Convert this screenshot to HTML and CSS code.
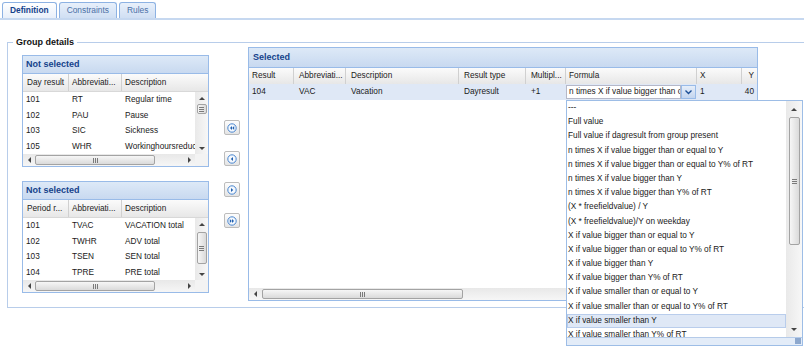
FILE: index.html
```html
<!DOCTYPE html>
<html>
<head>
<meta charset="utf-8">
<link rel="stylesheet" href="styles.css">
</head>
<body>
<div class="tabbar">
  <div class="tab active">Definition</div>
  <div class="tab">Constraints</div>
  <div class="tab">Rules</div>
</div>
<div class="page">
  <fieldset class="group">
    <legend>Group details</legend>
    <div class="group-body">
      <div class="left-col">
        <div class="panel small">
          <div class="panel-head">Not selected</div>
          <div class="ghead">
            <div class="hc c1">Day result</div>
            <div class="hc c2">Abbreviati...</div>
            <div class="hc c3">Description</div>
          </div>
          <div class="gbody">
            <div class="rows">
              <div class="row"><div class="c c1">101</div><div class="c c2">RT</div><div class="c c3">Regular time</div></div>
              <div class="row"><div class="c c1">102</div><div class="c c2">PAU</div><div class="c c3">Pause</div></div>
              <div class="row"><div class="c c1">103</div><div class="c c2">SIC</div><div class="c c3">Sickness</div></div>
              <div class="row"><div class="c c1">105</div><div class="c c2">WHR</div><div class="c c3">Workinghoursreduction</div></div>
            </div>
            <div class="vscroll">
              <div class="varr"><span class="tri-up"></span></div>
              <div class="vthumb t1"><span class="hgrip"></span></div>
              <div class="vfill"></div>
              <div class="varr"><span class="tri-down"></span></div>
            </div>
          </div>
          <div class="hrow">
            <div class="hscroll">
              <div class="harr"><span class="tri-left"></span></div>
              <div class="hthumb small-thumb"><span class="vgrip"></span></div>
              <div class="hfill"></div>
              <div class="harr"><span class="tri-right"></span></div>
            </div>
            <div class="corner"></div>
          </div>
        </div>

        <div class="panel small">
          <div class="panel-head">Not selected</div>
          <div class="ghead">
            <div class="hc c1">Period r...</div>
            <div class="hc c2">Abbreviati...</div>
            <div class="hc c3">Description</div>
          </div>
          <div class="gbody">
            <div class="rows">
              <div class="row"><div class="c c1">101</div><div class="c c2">TVAC</div><div class="c c3">VACATION total</div></div>
              <div class="row"><div class="c c1">102</div><div class="c c2">TWHR</div><div class="c c3">ADV total</div></div>
              <div class="row"><div class="c c1">103</div><div class="c c2">TSEN</div><div class="c c3">SEN total</div></div>
              <div class="row"><div class="c c1">104</div><div class="c c2">TPRE</div><div class="c c3">PRE total</div></div>
            </div>
            <div class="vscroll">
              <div class="varr"><span class="tri-up"></span></div>
              <div class="vthumb t2"><span class="hgrip"></span></div>
              <div class="vfill"></div>
              <div class="varr"><span class="tri-down"></span></div>
            </div>
          </div>
          <div class="hrow">
            <div class="hscroll">
              <div class="harr"><span class="tri-left"></span></div>
              <div class="hthumb small-thumb"><span class="vgrip"></span></div>
              <div class="hfill"></div>
              <div class="harr"><span class="tri-right"></span></div>
            </div>
            <div class="corner"></div>
          </div>
        </div>
      </div>

      <div class="move-btns">
        <div class="mbtn"><svg width="10" height="10" viewBox="0 0 10 10"><circle cx="5" cy="5" r="4.2" fill="#f4f8fd" stroke="#4a86cf" stroke-width="1"/><path d="M5 3 L3 5 L5 7Z M7.2 3 L5.2 5 L7.2 7Z" fill="#2060b0"/></svg></div>
        <div class="mbtn"><svg width="10" height="10" viewBox="0 0 10 10"><circle cx="5" cy="5" r="4.2" fill="#f4f8fd" stroke="#4a86cf" stroke-width="1"/><path d="M6 3 L3.8 5 L6 7Z" fill="#2060b0"/></svg></div>
        <div class="mbtn"><svg width="10" height="10" viewBox="0 0 10 10"><circle cx="5" cy="5" r="4.2" fill="#f4f8fd" stroke="#4a86cf" stroke-width="1"/><path d="M4 3 L6.2 5 L4 7Z" fill="#2060b0"/></svg></div>
        <div class="mbtn"><svg width="10" height="10" viewBox="0 0 10 10"><circle cx="5" cy="5" r="4.2" fill="#f4f8fd" stroke="#4a86cf" stroke-width="1"/><path d="M2.8 3 L4.8 5 L2.8 7Z M5 3 L7 5 L5 7Z" fill="#2060b0"/></svg></div>
      </div>

      <div class="panel selected">
        <div class="panel-head">Selected</div>
        <div class="ghead sel-ghead">
          <div class="hc s1">Result</div>
          <div class="hc s2">Abbreviati...</div>
          <div class="hc s3">Description</div>
          <div class="hc s4">Result type</div>
          <div class="hc s5">Multipl...</div>
          <div class="hc s6">Formula</div>
          <div class="hc s7">X</div>
          <div class="hc s8 right">Y</div>
        </div>
        <div class="row sel-row">
          <div class="c s1">104</div>
          <div class="c s2">VAC</div>
          <div class="c s3">Vacation</div>
          <div class="c s4">Dayresult</div>
          <div class="c s5">+1</div>
          <div class="c s6 combo-cell">
            <div class="combo">
              <div class="combo-input">n times X if value bigger than or</div>
              <div class="combo-trigger"><svg width="9" height="8" viewBox="0 0 9 8"><path d="M1.5 2.5 L4.5 5.5 L7.5 2.5" fill="none" stroke="#1c4f97" stroke-width="1.4"/></svg></div>
            </div>
          </div>
          <div class="c s7">1</div>
          <div class="c s8 right">40</div>
        </div>
        <div class="sel-body"></div>
        <div class="hscroll sel-hscroll">
          <div class="harr"><span class="tri-left"></span></div>
          <div class="hthumb big-thumb"><span class="vgrip"></span></div>
          <div class="hfill"></div>
          <div class="harr"><span class="tri-right"></span></div>
        </div>

        <div class="combo-list">
          <div class="cl-main">
            <div class="cl-items">
              <div class="cl-item">---</div>
              <div class="cl-item">Full value</div>
              <div class="cl-item">Full value if dagresult from group present</div>
              <div class="cl-item">n times X if value bigger than or equal to Y</div>
              <div class="cl-item">n times X if value bigger than or equal to Y% of RT</div>
              <div class="cl-item">n times X if value bigger than Y</div>
              <div class="cl-item">n times X if value bigger than Y% of RT</div>
              <div class="cl-item">(X * freefieldvalue) / Y</div>
              <div class="cl-item">(X * freefieldvalue)/Y on weekday</div>
              <div class="cl-item">X if value bigger than or equal to Y</div>
              <div class="cl-item">X if value bigger than or equal to Y% of RT</div>
              <div class="cl-item">X if value bigger than Y</div>
              <div class="cl-item">X if value bigger than Y% of RT</div>
              <div class="cl-item">X if value smaller than or equal to Y</div>
              <div class="cl-item">X if value smaller than or equal to Y% of RT</div>
              <div class="cl-item sel">X if value smaller than Y</div>
              <div class="cl-item">X if value smaller than Y% of RT</div>
            </div>
            <div class="cl-scroll">
              <div class="cl-arr"><span class="tri-up"></span></div>
              <div class="cl-thumb"><span class="hgrip"></span></div>
              <div class="vfill"></div>
              <div class="cl-arr"><span class="tri-down"></span></div>
            </div>
          </div>
          <div class="cl-foot"><span class="grip-dots"></span></div>
        </div>
      </div>
    </div>
  </fieldset>
</div>
</body>
</html>
```
FILE: styles.css
```css
html, body {
  margin: 0;
  padding: 0;
}
body {
  font-family: "Liberation Sans", Arial, sans-serif;
  font-size: 8.25px;
  color: #1a1a1a;
  background: #fff;
  width: 804px;
  height: 348px;
  overflow: hidden;
}

/* tabs */
.tabbar {
  display: flex;
  align-items: flex-end;
  gap: 2px;
  padding-left: 2px;
  height: 18px;
  border-bottom: 2px solid #c6d8f0;
}
.tab {
  box-sizing: border-box;
  height: 16px;
  padding: 0 7px;
  border: 1px solid #8db2e3;
  border-bottom: none;
  border-radius: 3px 3px 0 0;
  background: linear-gradient(#e8f0fb, #d0dff3);
  color: #4b70a6;
  font-size: 8.4px;
  line-height: 15px;
}
.tab.active {
  background: linear-gradient(#ffffff, #e9f0fa);
  color: #15428b;
  font-weight: bold;
}

/* fieldset */
.page {
  padding: 17px 0 0 7px;
}
.group {
  margin: 0 -20px 0 0;
  padding: 0 0 6px 5px;
  border: 1px solid #b8cdea;
  min-width: 0;
}
.group legend {
  padding: 0 3px;
  font-weight: bold;
  font-size: 9px;
  line-height: 10px;
  color: #111;
}
.group-body {
  display: flex;
  align-items: flex-start;
  padding-left: 9px;
}

/* panels */
.panel {
  box-sizing: border-box;
  border: 1px solid #99bbe8;
  background: #fff;
}
.panel-head {
  height: 17px;
  border-bottom: 1px solid #99bbe8;
  background: linear-gradient(#dde9f7, #c8d9f0);
  color: #15428b;
  font-weight: bold;
  font-size: 9px;
  line-height: 17px;
  padding-left: 3px;
}
.left-col {
  width: 187px;
  margin-top: 8px;
  display: flex;
  flex-direction: column;
  gap: 14px;
}
.small {
  height: 112px;
  display: flex;
  flex-direction: column;
}

/* grid header */
.ghead {
  display: flex;
  box-sizing: border-box;
  height: 18px;
  background: linear-gradient(#fbfbfb, #e7e7e7);
  border-bottom: 1px solid #d8d8d8;
}
.hc {
  box-sizing: border-box;
  border-right: 1px solid #d0d0d0;
  padding-left: 3px;
  line-height: 17px;
  white-space: nowrap;
  overflow: hidden;
  color: #222;
}
.c1 { width: 46px; flex: none; padding-left: 4px; }
.c2 { width: 53px; flex: none; }
.c3 { flex: 1; min-width: 0; border-right: none; }

.gbody {
  display: flex;
  height: 62px;
}
.rows {
  flex: 1;
  min-width: 0;
  overflow: hidden;
}
.row {
  display: flex;
  height: 15.5px;
  line-height: 15.5px;
  white-space: nowrap;
}
.c {
  box-sizing: border-box;
  padding-left: 3px;
  overflow: hidden;
  white-space: nowrap;
}

/* scrollbars */
.vscroll {
  width: 13px;
  flex: none;
  display: flex;
  flex-direction: column;
  align-items: center;
  background: linear-gradient(90deg, #e9e9e9, #f7f7f7);
}
.varr, .cl-arr {
  height: 12px;
  width: 100%;
  flex: none;
  display: flex;
  align-items: center;
  justify-content: center;
}
.cl-arr { height: 16px; }
.vfill { flex: 1; }
.vthumb, .cl-thumb {
  box-sizing: border-box;
  width: 10px;
  flex: none;
  border: 1px solid #a3a3a3;
  border-radius: 2px;
  background: linear-gradient(90deg, #f6f6f6, #dadada);
  display: flex;
  align-items: center;
  justify-content: center;
}
.t1 { height: 10px; }
.t2 { height: 32px; margin-top: 2px; }
.hgrip {
  width: 5px;
  height: 5px;
  background: repeating-linear-gradient(#7a7a7a 0 1px, transparent 1px 2px);
}
.tri-up {
  width: 0; height: 0;
  border-left: 3px solid transparent;
  border-right: 3px solid transparent;
  border-bottom: 3px solid #444;
}
.tri-down {
  width: 0; height: 0;
  border-left: 3px solid transparent;
  border-right: 3px solid transparent;
  border-top: 3px solid #444;
}
.tri-left {
  width: 0; height: 0;
  border-top: 3px solid transparent;
  border-bottom: 3px solid transparent;
  border-right: 3px solid #444;
}
.tri-right {
  width: 0; height: 0;
  border-top: 3px solid transparent;
  border-bottom: 3px solid transparent;
  border-left: 3px solid #444;
}
.hrow {
  display: flex;
  height: 12px;
}
.hscroll {
  flex: 1;
  display: flex;
  align-items: center;
  height: 12px;
  background: linear-gradient(#e8e8e8, #f6f6f6);
}
.harr {
  width: 12px;
  height: 12px;
  flex: none;
  display: flex;
  align-items: center;
  justify-content: center;
}
.hthumb {
  box-sizing: border-box;
  height: 10px;
  flex: none;
  border: 1px solid #a3a3a3;
  border-radius: 2px;
  background: linear-gradient(#f6f6f6, #dadada);
  display: flex;
  align-items: center;
  justify-content: center;
}
.small-thumb { width: 120px; }
.big-thumb { width: 201px; margin-left: 1px; }
.vgrip {
  width: 5px;
  height: 5px;
  background: repeating-linear-gradient(90deg, #7a7a7a 0 1px, transparent 1px 2px);
}
.hfill { flex: 1; }
.corner {
  width: 13px;
  flex: none;
  background: #f3f3f3;
}

/* move buttons */
.move-btns {
  margin: 73px 0 0 15px;
  display: flex;
  flex-direction: column;
  gap: 16px;
}
.mbtn {
  box-sizing: border-box;
  width: 16px;
  height: 15px;
  border: 1px solid #bcbcbc;
  border-radius: 2px;
  background: linear-gradient(#fdfdfd, #e4e4e4);
  display: flex;
  align-items: center;
  justify-content: center;
}

/* selected panel */
.selected {
  position: relative;
  width: 510px;
  height: 254px;
  margin-left: 8px;
  display: flex;
  flex-direction: column;
}
.selected .panel-head {
  height: 19px;
  line-height: 19px;
  padding-left: 4px;
}
.sel-ghead {
  height: 16px;
  border-bottom: none;
}
.sel-ghead .hc { line-height: 16px; }
.s1 { width: 45px; flex: none; padding-left: 3px; }
.s2 { width: 52px; flex: none; padding-left: 5px; }
.s3 { width: 113px; flex: none; padding-left: 5px; }
.s4 { width: 67px; flex: none; padding-left: 5px; }
.s5 { width: 40px; flex: none; padding-left: 5px; }
.s6 { width: 131px; flex: none; padding-left: 3px; }
.s7 { width: 45px; flex: none; padding-left: 3px; }
.s8 { width: 15px; flex: none; border-right: none; }
.right { text-align: right; padding-left: 0; padding-right: 3px; }
.sel-row {
  height: 16px;
  line-height: 16px;
  background: #dfe8f6;
}
.combo-cell {
  padding: 1px 1px 1px 0;
}
.combo {
  display: flex;
  height: 14px;
}
.combo-input {
  flex: 1;
  min-width: 0;
  box-sizing: border-box;
  border: 1px solid #b5b8c8;
  background: #fff;
  padding-left: 2px;
  line-height: 12px;
  white-space: nowrap;
  overflow: hidden;
}
.combo-trigger {
  width: 15px;
  flex: none;
  box-sizing: border-box;
  border: 1px solid #99bbe8;
  background: linear-gradient(#e6eef9, #c3d5ef);
  display: flex;
  align-items: center;
  justify-content: center;
}
.sel-body { flex: 1; }
.sel-hscroll { flex: none; }

/* combo dropdown list */
.combo-list {
  position: absolute;
  left: 317px;
  top: 52px;
  width: 237px;
  height: 246px;
  box-sizing: border-box;
  border: 1px solid #9dbde6;
  background: #fff;
  display: flex;
  flex-direction: column;
  z-index: 5;
}
.cl-main {
  display: flex;
  height: 236px;
  flex: none;
}
.cl-items {
  flex: 1;
  min-width: 0;
  overflow: hidden;
}
.cl-item {
  box-sizing: border-box;
  height: 14.2px;
  line-height: 14.2px;
  padding-left: 1px;
  white-space: nowrap;
  overflow: hidden;
}
.cl-item.sel {
  background: #dfe8f6;
  border: 1px solid #b9cdec;
  line-height: 12.2px;
  padding-left: 0;
}
.cl-scroll {
  width: 16px;
  flex: none;
  display: flex;
  flex-direction: column;
  align-items: center;
  background: linear-gradient(90deg, #e9e9e9, #f7f7f7);
}
.cl-thumb {
  width: 11px;
  height: 128px;
}
.cl-foot {
  flex: 1;
  background: #e3ecf8;
  border-top: 1px solid #b5cbe9;
  display: flex;
  justify-content: flex-end;
  align-items: flex-end;
}
.grip-dots {
  width: 6px;
  height: 6px;
  margin: 0 1px 1px 0;
  background: radial-gradient(circle, #8aa6cc 0.7px, transparent 0.9px) 0 0 / 2px 2px;
}
```
